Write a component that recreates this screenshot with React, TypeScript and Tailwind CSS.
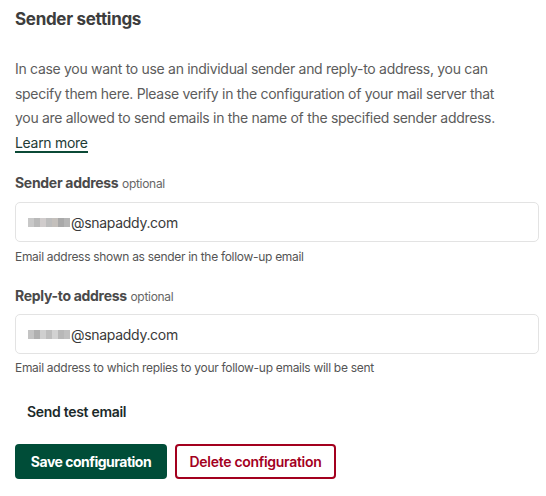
import React from "react";

function Blur({ shades }: { shades: string[] }) {
  return (
    <span className="inline-flex items-center h-[9px] mr-[1px]">
      {shades.map((c, i) => (
        <span key={i} className="inline-block w-[6px] h-[9px]" style={{ background: c }} />
      ))}
    </span>
  );
}

export default function App() {
  const font = { fontFamily: "Inter, 'Noto Sans', sans-serif" };
  return (
    <div className="w-[546px] h-[496px] bg-white px-[15px] pt-[7px] tracking-[-0.3px]" style={font}>
      <h2 className="text-[17px] leading-[24px] font-bold text-[#3d3d3d] tracking-[-0.3px]">
        Sender settings
      </h2>
      <p className="mt-[26px] max-w-[500px] text-[14px] leading-[24.5px] text-[#5c5c5c]">
        In case you want to use an individual sender and reply-to address, you can specify them here. Please verify in the configuration of your mail server that you are allowed to send emails in the name of the specified sender address.
      </p>
      <div className="text-[14px] leading-[24.5px]">
        <a className="text-[#1e3b36] border-b-[2px] border-[#0b4a36]">Learn more</a>
      </div>

      <div className="mt-[18px] text-[14px] leading-[20px]">
        <span className="font-bold text-[#4a4a4a]">Sender address</span>{" "}
        <span className="text-[12px] text-[#666]">optional</span>
      </div>
      <div className="mt-[8px] h-[40px] w-[524px] border border-[#e3e3e3] rounded-[5px] flex items-center pl-[12px] text-[14px] text-[#3a3a3a]">
        <Blur shades={["#c8c8c8", "#b9b9b9", "#d0cccc", "#bdbdbd", "#c4c0bc", "#a9a9a9", "#b5b5b5"]} />
        <span>@snapaddy.com</span>
      </div>
      <div className="mt-[7px] text-[12px] leading-[16px] text-[#555]">
        Email address shown as sender in the follow-up email
      </div>

      <div className="mt-[21px] text-[14px] leading-[20px]">
        <span className="font-bold text-[#4a4a4a]">Reply-to address</span>{" "}
        <span className="text-[12px] text-[#666]">optional</span>
      </div>
      <div className="mt-[7px] h-[40px] w-[524px] border border-[#e3e3e3] rounded-[5px] flex items-center pl-[12px] text-[14px] text-[#3a3a3a]">
        <Blur shades={["#c4c4c4", "#b0b0b0", "#cfcfcf", "#bdbdbd", "#d2d2d2", "#b8b8b8", "#c0c0c0"]} />
        <span>@snapaddy.com</span>
      </div>
      <div className="mt-[6px] text-[12px] leading-[16px] text-[#555]">
        Email address to which replies to your follow-up emails will be sent
      </div>

      <button className="mt-[18px] h-[34px] px-[12px] text-[14px] font-semibold text-[#1c2a2a] block">
        Send test email
      </button>

      <div className="mt-[16px] flex gap-[8px]">
        <button className="h-[35px] w-[152px] rounded-[4px] bg-[#004d38] text-white text-[14px] font-bold tracking-[-0.5px]">
          Save configuration
        </button>
        <button className="h-[35px] w-[161px] rounded-[4px] border-[2px] border-[#a3001e] text-[#a3001e] text-[14px] font-semibold">
          Delete configuration
        </button>
      </div>
    </div>
  );
}
